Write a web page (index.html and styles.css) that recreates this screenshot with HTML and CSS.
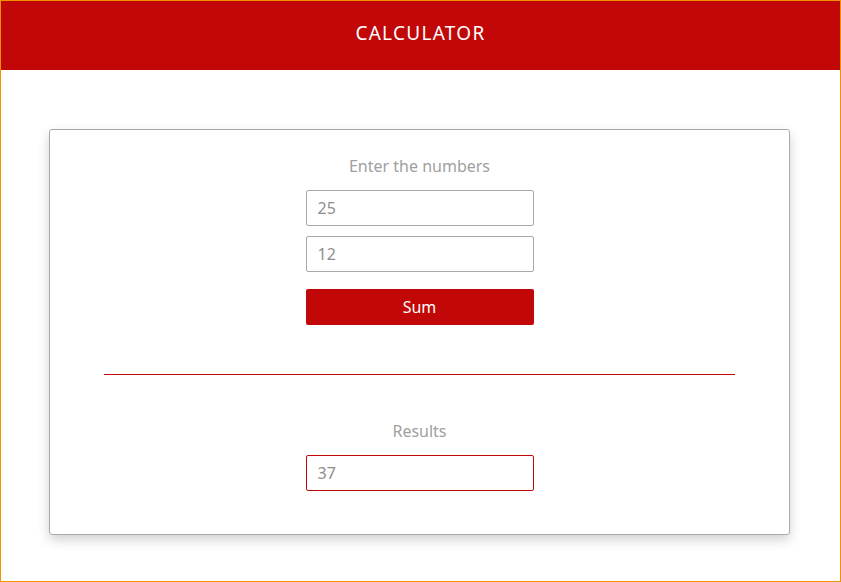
FILE: index.html
```html
<!DOCTYPE html>
<html lang="en">
<head>
<meta charset="utf-8">
<title>Calculator</title>
<link rel="stylesheet" href="styles.css">
</head>
<body>
<div class="page">
  <header class="topbar"><h1 class="title">CALCULATOR</h1></header>
  <main class="card">
    <section class="group">
      <p class="label">Enter the numbers</p>
      <input class="field" type="text" value="25">
      <input class="field" type="text" value="12">
      <button class="btn" type="button">Sum</button>
    </section>
    <hr class="divider">
    <section class="group">
      <p class="label">Results</p>
      <input class="field field-result" type="text" value="37">
    </section>
  </main>
</div>
</body>
</html>
```
FILE: styles.css
```css
* { box-sizing: border-box; }
html, body { margin: 0; padding: 0; background: #fff; }
body { font-family: "Noto Sans", "Open Sans", sans-serif; }
.page {
  width: 841px;
  height: 582px;
  border: 1px solid #f39200;
  display: flex;
  flex-direction: column;
}
.topbar {
  width: 100%;
  height: 69px;
  background: #c10707;
  display: flex;
  align-items: center;
  justify-content: center;
  padding-bottom: 5px;
}
.title {
  margin: 0;
  color: #fff;
  font-size: 19px;
  font-weight: 400;
  letter-spacing: 1.3px;
  line-height: 20px;
}
.card {
  margin: 59px 0 0 48px;
  width: 741px;
  height: 406px;
  border: 1px solid #a9a9a9;
  border-radius: 3px;
  box-shadow: 0 5px 12px rgba(0,0,0,0.18);
  padding: 26px 54px 0;
  display: flex;
  flex-direction: column;
  align-items: center;
}
.group {
  display: flex;
  flex-direction: column;
  align-items: center;
  gap: 10px;
}
.label {
  margin: 0 0 4px;
  color: #a0a0a0;
  font-size: 16px;
  line-height: 20px;
}
.field {
  width: 228px;
  height: 36px;
  border: 1px solid #a9a9a9;
  border-radius: 2px;
  padding: 0 11px;
  font-family: inherit;
  font-size: 16px;
  color: #8e8e8e;
  background: #fff;
  outline: none;
}
.field-result { border-color: #c10707; }
.btn {
  margin-top: 7px;
  width: 228px;
  height: 36px;
  border: none;
  border-radius: 2px;
  background: #c10707;
  color: #fff;
  font-family: inherit;
  font-size: 16px;
}
.divider {
  align-self: stretch;
  margin: 49px 0 46px;
  border: none;
  border-top: 1px solid #c10707;
  height: 0;
}
```
